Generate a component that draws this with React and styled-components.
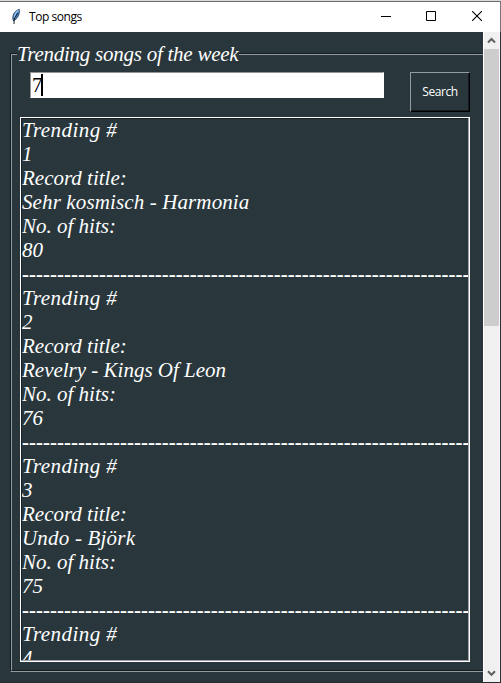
import React from "react";
import styled, { createGlobalStyle } from "styled-components";

const surface = "#29373c";

const GlobalStyle = createGlobalStyle`
  * { box-sizing: border-box; }
  body { margin: 0; overflow: hidden; background: ${surface}; }
`;

const Window = styled.div`
  width: 501px;
  height: 683px;
  display: flex;
  flex-direction: column;
  background: ${surface};
  border-right: 1px solid #2b3236;
  border-bottom: 1px solid #252b30;
`;

const DesktopEdge = styled.div`
  flex: none;
  height: 2px;
  margin-right: -1px;
  background: #d9d9d9;
  border-bottom: 1px solid #6e6e6e;
`;

const TitleBar = styled.header`
  flex: none;
  height: 30px;
  display: flex;
  align-items: center;
  padding-left: 9px;
  margin-right: -1px;
  background: #fff;
  border-right: 1px solid #777;
`;

const Title = styled.h1`
  flex: 1;
  margin: 0 0 0 6px;
  font: 400 12px/16px "Open Sans", "Noto Sans", sans-serif;
  letter-spacing: -0.45px;
  color: #000;
`;

const WindowButton = styled.button`
  width: 46px;
  height: 30px;
  padding: 0 0 2px;
  border: 0;
  background: none;
  display: grid;
  place-items: center;
`;

const Body = styled.main`
  flex: 1;
  min-height: 0;
  display: flex;
`;

const Content = styled.div`
  width: 483px;
  padding: 10px 0 10px 10px;
  display: flex;
  flex-direction: column;
`;

const GroupHeader = styled.div`
  height: 24px;
  display: flex;
`;

const GroupLegend = styled.h2`
  flex: none;
  width: 222px;
  margin: 0;
  white-space: nowrap;
  font: italic 400 21px/24px "Liberation Serif", serif;
  letter-spacing: -0.25px;
  color: #fff;
`;

const HeaderRule = styled.div`
  width: ${(p) => p.$width || "auto"};
  flex: ${(p) => (p.$width ? "none" : 1)};
  margin-top: 11px;
  border-top: 1px solid #141b1e;
  border-left: ${(p) => (p.$corner ? "1px solid #141b1e" : "0")};

  &::before {
    content: "";
    display: block;
    height: ${(p) => (p.$corner ? "12px" : "1px")};
    border-top: 1px solid #949b9e;
    border-left: ${(p) => (p.$corner ? "1px solid #949b9e" : "0")};
  }
`;

const GroupBody = styled.section`
  flex: 1;
  min-height: 0;
  border-left: 1px solid #141b1e;
  border-bottom: 1px solid #949b9e;
`;

const GroupInner = styled.div`
  height: 100%;
  padding: 6px 13px 8px 8px;
  border-left: 1px solid #949b9e;
  border-bottom: 1px solid #141b1e;
  display: flex;
  flex-direction: column;
`;

const SearchRow = styled.div`
  flex: none;
  height: 40px;
  margin: 0 0 5px 10px;
  display: flex;
  justify-content: space-between;
  align-items: flex-start;
`;

const Entry = styled.div`
  width: 354px;
  height: 26px;
  padding-left: 1px;
  display: flex;
  align-items: center;
  background: #fff;
  border: 1px solid #fff;
  border-top-color: #949494;
  border-left-color: #949494;
  font: 400 21px/24px "Liberation Serif", serif;
  color: #000;
`;

const Caret = styled.span`
  width: 2px;
  height: 22px;
  margin-left: -2px;
  background: #000;
`;

const SearchButton = styled.button`
  width: 60px;
  height: 40px;
  padding: 0;
  background: ${surface};
  border: 1px solid #949b9e;
  border-right: 1px solid #000;
  border-bottom: 1px solid #000;
  box-shadow: inset -1px -1px #141b1e;
  font: 400 12px/16px "Open Sans", "Noto Sans", sans-serif;
  letter-spacing: -0.45px;
  color: #fff;
`;

const ResultBox = styled.div`
  flex: 1;
  min-height: 0;
  overflow: hidden;
  border: 1px solid #fff;
  box-shadow: inset -1px -1px #9ba1a5, inset 1px 1px #182024;
  padding: 0 1px 1px;
  font: italic 400 21px/24px "Liberation Serif", serif;
  color: #fff;
`;

const Clip = styled.div`
  height: 100%;
  overflow: hidden;
`;

const Line = styled.div`
  height: 24px;
  white-space: nowrap;
  letter-spacing: ${(p) => p.$tracking || "0"};
`;

const Separator = styled(Line)`
  font-style: normal;
  font-weight: 700;
`;

const Scrollbar = styled.aside`
  width: 17px;
  display: flex;
  flex-direction: column;
  background: #f0f0f0;
  border-left: 1px solid #fff;
  border-right: 1px solid #f8f8f8;
`;

const ScrollArrow = styled.div`
  height: 17px;
  flex: none;
  display: grid;
  place-items: center;
`;

const Track = styled.div`
  flex: 1;
`;

const Thumb = styled.div`
  height: 277px;
  background: #cdcdcd;
`;

const Feather = () => (
  <svg width="14" height="18" viewBox="0 0 14 18">
    <path d="M4.5 13C2.5 8.5 5 3 10.3 1.3c.7 3.7-.8 7.5-3.5 10z" fill="#4483c9" stroke="#25384c" strokeWidth=".8" />
    <path d="M5.5 10C5.5 6.5 7.5 3.8 9.6 2.4" fill="none" stroke="#8fc1f1" strokeWidth="1.4" />
    <path d="M8.7 5 5.2 11 5 16" fill="none" stroke="#111" strokeWidth=".9" />
  </svg>
);

const Chevron = ({ down }) => (
  <svg width="9" height="7" viewBox="0 0 9 7">
    <path d={down ? "M1 1.3 4.5 4.8 8 1.3" : "M1 5.5 4.5 2 8 5.5"} fill="none" stroke="#606060" strokeWidth="2" />
  </svg>
);

const songs = [
  { rank: 1, title: "Sehr kosmisch - Harmonia", hits: 80, tracking: "0.12px" },
  { rank: 2, title: "Revelry - Kings Of Leon", hits: 76 },
  { rank: 3, title: "Undo - Björk", hits: 75, tracking: "0.2px" },
];

const Song = ({ rank, title, hits, tracking }) => (
  <>
    <Line $tracking="0.45px">Trending #</Line>
    <Line>{rank}</Line>
    <Line>Record title:</Line>
    <Line $tracking={tracking}>{title}</Line>
    <Line>No. of hits:</Line>
    <Line>{hits}</Line>
    <Separator>{"-".repeat(64)}</Separator>
  </>
);

export default function App() {
  return (
    <>
      <GlobalStyle />
      <Window>
        <DesktopEdge />
        <TitleBar>
          <Feather />
          <Title>Top songs</Title>
          <WindowButton aria-label="Minimize">
            <svg width="12" height="10"><path d="M2 5.5h10" stroke="#000" /></svg>
          </WindowButton>
          <WindowButton aria-label="Maximize">
            <svg width="10" height="10"><path d="M.5.5h9v9h-9z" fill="none" stroke="#000" /></svg>
          </WindowButton>
          <WindowButton aria-label="Close">
            <svg width="10" height="10"><path d="M0 0 10 10M10 0 0 10" stroke="#000" strokeWidth="1.1" /></svg>
          </WindowButton>
        </TitleBar>
        <Body>
          <Content>
            <GroupHeader>
              <HeaderRule $width="7px" $corner />
              <GroupLegend>Trending songs of the week</GroupLegend>
              <HeaderRule />
            </GroupHeader>
            <GroupBody>
              <GroupInner>
                <SearchRow>
                  <Entry>7<Caret /></Entry>
                  <SearchButton>Search</SearchButton>
                </SearchRow>
                <ResultBox>
                  <Clip>
                    {songs.map((s) => <Song key={s.rank} {...s} />)}
                    <Line $tracking="0.45px">Trending #</Line>
                    <Line>4</Line>
                  </Clip>
                </ResultBox>
              </GroupInner>
            </GroupBody>
          </Content>
          <Scrollbar>
            <ScrollArrow><Chevron /></ScrollArrow>
            <Track><Thumb /></Track>
            <ScrollArrow><Chevron down /></ScrollArrow>
          </Scrollbar>
        </Body>
      </Window>
    </>
  );
}
